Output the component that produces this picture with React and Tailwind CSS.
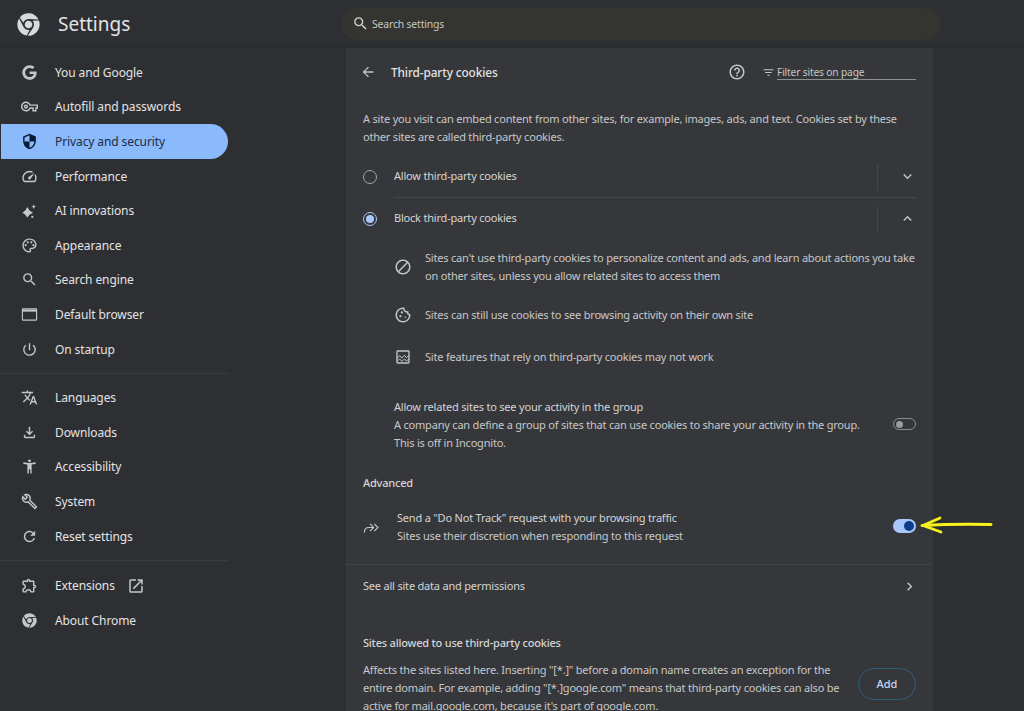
import React from 'react';
import { FaChrome, FaGoogle } from 'react-icons/fa';
import {
  MdArrowBack, MdAccessibilityNew, MdChevronRight, MdExpandLess, MdExpandMore, MdFilterList,
  MdOpenInNew, MdOutlineBlock, MdOutlineBuild, MdOutlineCookie, MdOutlineExtension, MdOutlineFileDownload,
  MdOutlineHelpOutline, MdOutlinePalette, MdOutlineSpeed, MdOutlineVpnKey, MdPowerSettingsNew, MdRefresh,
  MdSearch, MdSecurity, MdTranslate,
} from 'react-icons/md';

const Sparkle = ({ className }) => (
  <svg viewBox="0 0 24 24" fill="currentColor" className={className}>
    <path d="M9 7l3 5 5 3-5 3-3 4-3-4-4-3 4-3z" />
    <path d="M18 3l1 2.5 2 1-2 1-1 2.5-1-2.5-2-1 2-1z" />
    <circle cx="16" cy="21" r="1.6" />
  </svg>
);

const WindowIcon = ({ className }) => (
  <svg viewBox="0 0 24 24" fill="none" stroke="currentColor" className={className}>
    <rect x="2" y="4" width="20" height="16" rx="1" strokeWidth="1.6" />
    <path d="M2 6.5h20" strokeWidth="3" />
  </svg>
);

const BrokenImage = ({ className }) => (
  <svg viewBox="0 0 24 24" fill="none" stroke="currentColor" strokeWidth="1.8" className={className}>
    <rect x="4" y="4" width="16" height="16" rx="1" />
    <path d="M4 14l3.5-4 3 3.5 3.5-4 2.5 3.5 3.5-3M4 18l3.5-3.5 3 3.5 3.5-3.5 2.5 3 3.5-3" strokeWidth="1.3" />
  </svg>
);

const DoubleArrow = ({ className }) => (
  <svg viewBox="0 0 24 24" fill="none" stroke="currentColor" strokeWidth="1.6" className={className}>
    <path d="M2 19c0-4 2-7 6-7h7M10 7l5 5-5 5M16 7l5 5-5 5" />
  </svg>
);

const groups = [
  [
    { label: 'You and Google', icon: FaGoogle, size: 'w-[15px] h-[15px]' },
    { label: 'Autofill and passwords', icon: MdOutlineVpnKey },
    { label: 'Privacy and security', icon: MdSecurity, active: true },
    { label: 'Performance', icon: MdOutlineSpeed },
    { label: 'AI innovations', icon: Sparkle },
    { label: 'Appearance', icon: MdOutlinePalette },
    { label: 'Search engine', icon: MdSearch },
    { label: 'Default browser', icon: WindowIcon },
    { label: 'On startup', icon: MdPowerSettingsNew },
  ],
  [
    { label: 'Languages', icon: MdTranslate },
    { label: 'Downloads', icon: MdOutlineFileDownload },
    { label: 'Accessibility', icon: MdAccessibilityNew },
    { label: 'System', icon: MdOutlineBuild },
    { label: 'Reset settings', icon: MdRefresh },
  ],
  [
    { label: 'Extensions', icon: MdOutlineExtension, external: true },
    { label: 'About Chrome', icon: FaChrome, size: 'w-[15px] h-[15px]' },
  ],
];

function NavRow({ item }) {
  const Icon = item.icon;
  return (
    <div className={`flex h-[34.6px] items-center ${item.active ? 'ml-px w-[227px] rounded-r-full bg-[#8ab9fc] pl-[20px] text-[#1d2c45]' : 'pl-[21px] text-[#e3e3e3]'}`}>
      <span className={`flex w-[16px] justify-center ${item.active ? 'text-[#0a1a33]' : 'text-[#c4c7c5]'}`}>
        <Icon className={item.size || 'w-[17px] h-[17px] shrink-0'} />
      </span>
      <span className="ml-[18px] pt-px text-[12px] tracking-[-0.1px]">{item.label}</span>
      {item.external && <MdOpenInNew className="ml-[12px] w-[18px] h-[18px] text-[#c4c7c5]" />}
    </div>
  );
}

function Radio({ checked }) {
  return checked ? (
    <span className="flex h-[14px] w-[14px] items-center justify-center rounded-full border-[1.5px] border-[#a8c7fa]">
      <span className="h-[8px] w-[8px] rounded-full bg-[#a8c7fa]" />
    </span>
  ) : (
    <span className="h-[14px] w-[14px] rounded-full border-[1.5px] border-[#a0a3a6]" />
  );
}

function CookieOption({ label, checked, open, divider }) {
  return (
    <div className={`flex items-center ${open ? 'h-[41px]' : 'h-[42px]'}`}>
      <Radio checked={checked} />
      <div className={`ml-[17px] flex h-full flex-1 items-center ${divider ? 'border-b border-[#46474b]' : ''}`}>
        <span className="flex-1 text-[11px] tracking-[-0.2px] text-[#d4d5d6]">{label}</span>
        <span className="flex h-[26px] w-[39px] items-center justify-center border-l border-[#46474b] text-[#c4c7c5]">
          {open ? <MdExpandLess className="w-[17px] h-[17px] ml-[21px]" /> : <MdExpandMore className="w-[17px] h-[17px] ml-[21px]" />}
        </span>
      </div>
    </div>
  );
}

function Bullet({ icon: Icon, children, className }) {
  return (
    <div className={`flex items-center ${className}`}>
      <Icon className="w-[18px] h-[18px] shrink-0 text-[#c4c7c5]" />
      <p className="ml-[13px] whitespace-nowrap text-[11px] leading-[18px] tracking-[-0.2px] text-[#c7c8c9]">{children}</p>
    </div>
  );
}

export default function App() {
  return (
    <div className="flex h-[711px] flex-col overflow-hidden bg-[#2e2f33] font-['Noto_Sans',sans-serif]">
      <header className="flex h-[48px] shrink-0 items-center border-b border-[#2a2b2e]">
        <div className="flex w-[342px] items-center pl-[17px] pt-[2px]">
          <FaChrome className="h-[23px] w-[23px] text-[#d8d9da]" />
          <span className="ml-[18px] text-[19px] text-[#e3e3e3]">Settings</span>
        </div>
        <div className="flex h-[32px] w-[599px] items-center rounded-full bg-[#343431] pl-[10px]">
          <MdSearch className="h-[17px] w-[17px] text-[#d0d0d0]" />
          <span className="ml-[3px] pt-[2px] text-[10.4px] tracking-[-0.15px] text-[#c4c7c5]">Search settings</span>
        </div>
      </header>

      <div className="flex min-h-0 flex-1">
        <nav className="w-[346px] shrink-0 pt-[7px]">
          <div className="w-[229px]">
            {groups.map((group, i) => (
              <div key={i} className={i === 1 ? 'mt-[7px] border-t border-[#3a3b3f] pt-[6px]' : i === 2 ? 'mt-[7px] border-t border-[#3a3b3f] pt-[7px]' : ''}>
                {group.map(item => <NavRow key={item.label} item={item} />)}
              </div>
            ))}
          </div>
        </nav>

        <main className="h-[800px] w-[587px] shrink-0 bg-[#36373b]">
          <div className="flex h-[48px] items-center pl-[14px] pr-[17px]">
            <MdArrowBack className="h-[16px] w-[16px] text-[#c4c7c5]" />
            <h1 className="ml-[15px] flex-1 pt-px text-[11.8px] font-medium tracking-[-0.1px] text-[#e3e3e3]">Third-party cookies</h1>
            <MdOutlineHelpOutline className="h-[18px] w-[18px] text-[#c4c7c5]" />
            <MdFilterList className="ml-[16px] h-[13px] w-[13px] text-[#c4c7c5]" />
            <div className="ml-[2px] w-[139px] border-b border-[#8e9092] text-[10.2px] leading-[14px] tracking-[-0.15px] text-[#c4c7c5]">Filter sites on page</div>
          </div>

          <div className="pl-[17px] pr-[17px]">
            <p className="mt-[14px] text-[11px] leading-[18px] tracking-[-0.2px] text-[#c7c8c9]">
              A site you visit can embed content from other sites, for example, images, ads, and text. Cookies set by these<br />
              other sites are called third-party cookies.
            </p>
            <div className="mt-[10px]">
              <CookieOption label="Allow third-party cookies" divider />
              <CookieOption label="Block third-party cookies" checked open />
            </div>

            <div className="pl-[31px]">
              <Bullet icon={MdOutlineBlock} className="mt-[10px]">
                Sites can't use third-party cookies to personalize content and ads, and learn about actions you take<br />
                on other sites, unless you allow related sites to access them
              </Bullet>
              <Bullet icon={MdOutlineCookie} className="mt-[21px]">Sites can still use cookies to see browsing activity on their own site</Bullet>
              <Bullet icon={BrokenImage} className="mt-[24px]">Site features that rely on third-party cookies may not work</Bullet>

              <div className="mt-[32px] flex items-center">
                <div className="flex-1 text-[11px] leading-[18px] tracking-[-0.2px]">
                  <div className="text-[#d4d5d6]">Allow related sites to see your activity in the group</div>
                  <div className="text-[#c7c8c9]">A company can define a group of sites that can use cookies to share your activity in the group.</div>
                  <div className="text-[#c7c8c9]">This is off in Incognito.</div>
                </div>
                <span className="mb-[2px] flex h-[12px] w-[23px] items-center rounded-full border border-[#8a8c8e] pl-[2px]">
                  <span className="h-[7px] w-[7px] rounded-full bg-[#9a9c9e]" />
                </span>
              </div>
            </div>

            <h2 className="mt-[22px] text-[11px] font-medium leading-[18px] tracking-[-0.2px] text-[#d4d5d6]">Advanced</h2>

            <div className="mt-[17px] flex items-center">
              <DoubleArrow className="h-[17px] w-[17px] text-[#c4c7c5]" />
              <div className="ml-[17px] flex-1 text-[11px] leading-[18px] tracking-[-0.2px]">
                <div className="text-[#d4d5d6]">Send a "Do Not Track" request with your browsing traffic</div>
                <div className="text-[#c7c8c9]">Sites use their discretion when responding to this request</div>
              </div>
              <span className="mb-[2px] flex h-[14px] w-[23px] items-center justify-end rounded-full bg-[#a8c7fa] pr-[2px]">
                <span className="h-[10px] w-[10px] rounded-full bg-[#0b3d8c]" />
              </span>
            </div>
          </div>

          <div className="mt-[19px] flex h-[43px] items-center border-t border-[#424347] pl-[17px] pr-[15px]">
            <span className="flex-1 text-[11px] tracking-[-0.2px] text-[#d4d5d6]">See all site data and permissions</span>
            <MdChevronRight className="h-[17px] w-[17px] text-[#c4c7c5]" />
          </div>

          <div className="pl-[17px] pr-[17px]">
            <h2 className="mt-[27px] text-[11px] font-medium leading-[18px] tracking-[-0.2px] text-[#d4d5d6]">Sites allowed to use third-party cookies</h2>
            <div className="mt-[9px] flex items-start">
              <p className="w-[478px] whitespace-nowrap text-[11px] leading-[18px] tracking-[-0.2px] text-[#c7c8c9]">
                Affects the sites listed here. Inserting "[*.]" before a domain name creates an exception for the<br />
                entire domain. For example, adding "[*.]google.com" means that third-party cookies can also be<br />
                active for mail.google.com, because it's part of google.com.
              </p>
              <button className="ml-auto mt-[7px] h-[32px] w-[58px] rounded-full border border-[#2c5f7a] text-[11px] font-medium text-[#c2d6f2]">Add</button>
            </div>
          </div>
        </main>
      </div>

      <svg viewBox="0 0 74 18" fill="none" stroke="#f7f21a" strokeLinecap="round" strokeLinejoin="round" className="absolute left-[920px] top-[516px] h-[18px] w-[74px]">
        <path d="M2 9.5C20 8.5 45 8 71 8.5" strokeWidth="3" />
        <path d="M20 2L3 9.5 21 16" strokeWidth="2.8" />
      </svg>
    </div>
  );
}
